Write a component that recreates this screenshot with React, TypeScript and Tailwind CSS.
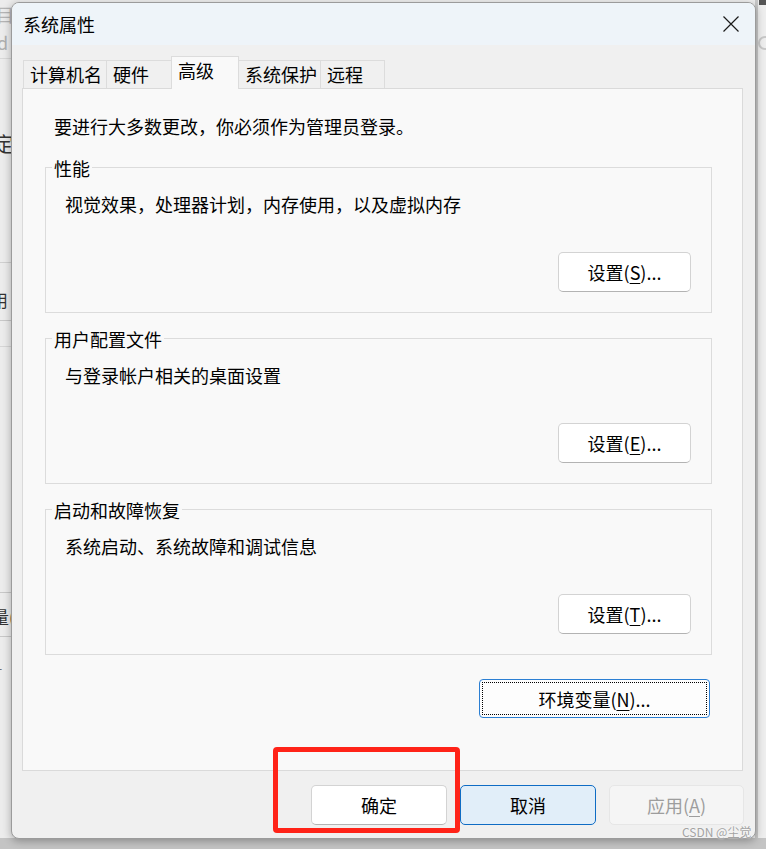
import React from 'react';

const FONT = { fontFamily: '"Noto Sans CJK SC", "Microsoft YaHei", sans-serif' };

function Mn({ children }: { children: React.ReactNode }) {
  return <span className="underline underline-offset-[3px] decoration-1">{children}</span>;
}

function SmallButton({ children }: { children: React.ReactNode }) {
  return (
    <button className="w-[133px] h-[40px] rounded-[5px] bg-white border border-[#d3d3d3] border-b-[#b3b3b3] text-[18px] leading-[24px] text-black">
      {children}
    </button>
  );
}

function Group({ title, text, button }: { title: string; text: string; button: React.ReactNode }) {
  return (
    <div className="relative ml-[22px] mr-[30px] h-[146px] border border-[#dcdcdc] flex flex-col">
      <span className="absolute left-[6px] -top-[12px] px-[2px] bg-[#f9f9f9] text-[18px] leading-[24px] text-black">
        {title}
      </span>
      <p className="pl-[19px] pt-[24px] text-[18px] leading-[24px] text-black">{text}</p>
      <div className="mt-[36px] flex justify-end pr-[20px]">{button}</div>
    </div>
  );
}

export default function App() {
  const tabs = [
    { label: '计算机名', w: 'w-[84px]', active: false },
    { label: '硬件', w: 'w-[66px]', active: false },
    { label: '高级', w: 'w-[68px]', active: true },
    { label: '系统保护', w: 'w-[82px]', active: false },
    { label: '远程', w: 'w-[64px]', active: false },
  ];

  return (
    <div className="relative w-[766px] h-[849px] overflow-hidden bg-[#f1f1f1]" style={FONT}>
      {/* ── Background window fragments ─────────────────────── */}
      <div className="absolute left-0 top-[0px] w-[20px] h-[849px] bg-[#ececec]">
        <span className="absolute -left-[4px] top-[4px] text-[18px] leading-[20px] text-[#b5b5b5]">目</span>
        <span className="absolute -left-[3px] top-[32px] text-[18px] leading-[20px] text-[#b0b0b0]">d</span>
        <div className="absolute left-0 top-[58px] w-[20px] h-[1px] bg-[#d8d8d8]" />
        <span className="absolute -left-[6px] top-[131px] text-[20px] leading-[26px] text-[#333]">定</span>
        <div className="absolute left-0 top-[262px] w-[20px] h-[1px] bg-[#d0d0d0]" />
        <span className="absolute -left-[9px] top-[288px] text-[17px] leading-[24px] text-[#333]">用</span>
        <div className="absolute left-0 top-[320px] w-[20px] h-[1px] bg-[#c8c8c8]" />
        <div className="absolute left-0 top-[346px] w-[20px] h-[1px] bg-[#d6d6d6]" />
        <div className="absolute left-0 top-[592px] w-[20px] h-[1px] bg-[#c8c8c8]" />
        <span className="absolute -left-[8px] top-[605px] text-[17px] leading-[24px] text-[#333]">量(</span>
        <div className="absolute left-0 top-[636px] w-[20px] h-[1px] bg-[#c8c8c8]" />
        <span className="absolute -left-[2px] top-[660px] text-[12px] leading-[16px] text-[#666]">-</span>
      </div>
      <div className="absolute right-0 top-0 w-[14px] h-[849px] bg-[#eeeeee]">
        <div className="absolute left-[3px] top-0 w-[3px] h-[849px] bg-[#c9c9c9]" />
        <div className="absolute left-[7px] top-0 w-[10px] h-[5px] bg-[#555]" />
        <div className="absolute left-[6px] top-[36px] w-[14px] h-[14px] rounded-full border-[2px] border-[#c8c8c8]" />
      </div>
      <div className="absolute left-0 bottom-0 w-[766px] h-[11px] bg-[#c4c4c4]" />

      {/* ── Dialog ─────────────────────── */}
      <div className="absolute left-[11px] top-[2px] w-[745px] h-[837px] rounded-[8px] border border-[#9b9b9b] bg-[#f0f0f0] shadow-[0_2px_8px_rgba(0,0,0,0.3)] flex flex-col overflow-hidden">
        {/* Title bar */}
        <div className="h-[42px] flex-shrink-0 bg-[#eef4f9] flex items-center justify-between">
          <span className="pl-[11px] text-[18px] leading-[24px] text-black">系统属性</span>
          <svg className="mr-[16px]" width="16" height="16" viewBox="0 0 16 16">
            <path d="M0.5 0.5 L15.5 15.5 M15.5 0.5 L0.5 15.5" stroke="#1a1a1a" strokeWidth="1.2" fill="none" />
          </svg>
        </div>

        {/* Body */}
        <div className="flex-1 flex flex-col">
          <div className="pl-[10px] pr-[12px] flex flex-col">
            {/* Tabs */}
            <div className="flex items-end h-[43px] pl-[1px] relative z-10">
              {tabs.map((t) =>
                t.active ? (
                  <div
                    key={t.label}
                    className={`${t.w} h-[33px] -mb-[1px] -ml-[2px] bg-[#f9f9f9] border border-b-0 border-[#dcdcdc] pl-[6px] text-[18px] leading-[26px] text-black`}
                  >
                    {t.label}
                  </div>
                ) : (
                  <div
                    key={t.label}
                    className={`${t.w} h-[28px] bg-[#f0f0f0] border border-b-0 border-l-0 first:border-l border-[#dcdcdc] pl-[6px] text-[18px] leading-[27px] text-black`}
                  >
                    {t.label}
                  </div>
                )
              )}
            </div>

            {/* Tab panel */}
            <div className="h-[683px] border border-[#dadada] bg-[#f9f9f9] flex flex-col">
              <p className="pl-[31px] pt-[25px] text-[18px] leading-[24px] text-black">
                要进行大多数更改，你必须作为管理员登录。
              </p>

              <div className="mt-[29px]">
                <Group
                  title="性能"
                  text="视觉效果，处理器计划，内存使用，以及虚拟内存"
                  button={<SmallButton>设置(<Mn>S</Mn>)...</SmallButton>}
                />
              </div>
              <div className="mt-[25px]">
                <Group
                  title="用户配置文件"
                  text="与登录帐户相关的桌面设置"
                  button={<SmallButton>设置(<Mn>E</Mn>)...</SmallButton>}
                />
              </div>
              <div className="mt-[25px]">
                <Group
                  title="启动和故障恢复"
                  text="系统启动、系统故障和调试信息"
                  button={<SmallButton>设置(<Mn>T</Mn>)...</SmallButton>}
                />
              </div>

              <div className="mt-[24px] flex justify-end pr-[32px]">
                <button className="relative w-[231px] h-[39px] rounded-[4px] bg-[#fdfdfd] border border-[#2b7fd3] text-[18px] leading-[24px] text-black">
                  <span className="absolute inset-[2px] border border-dotted border-black" />
                  环境变量(<Mn>N</Mn>)...
                </button>
              </div>
            </div>
          </div>

          {/* Footer */}
          <div className="mt-[14px] flex justify-end gap-[13px] pr-[11px]">
            <button className="w-[136px] h-[40px] rounded-[5px] bg-white border border-[#d3d3d3] border-b-[#b3b3b3] text-[18px] leading-[24px] text-black">
              确定
            </button>
            <button className="w-[136px] h-[40px] rounded-[5px] bg-[#e1eef9] border border-[#0f6cc4] text-[18px] leading-[24px] text-black">
              取消
            </button>
            <button className="w-[135px] h-[40px] rounded-[5px] bg-[#f5f5f5] border border-[#e6e6e6] text-[18px] leading-[24px] text-[#9d9d9d]">
              应用(<Mn>A</Mn>)
            </button>
          </div>
        </div>
      </div>

      {/* ── Annotation + watermark ─────────────────────── */}
      <div className="absolute left-[273px] top-[747px] w-[187px] h-[86px] rounded-[4px] border-[5px] border-[#ff2318]" />
      <span className="absolute left-[682px] top-[824px] text-[12px] leading-[16px] text-[#a3a3a3] [text-shadow:0_0_2px_#fff]">
        CSDN @尘觉
      </span>
    </div>
  );
}
